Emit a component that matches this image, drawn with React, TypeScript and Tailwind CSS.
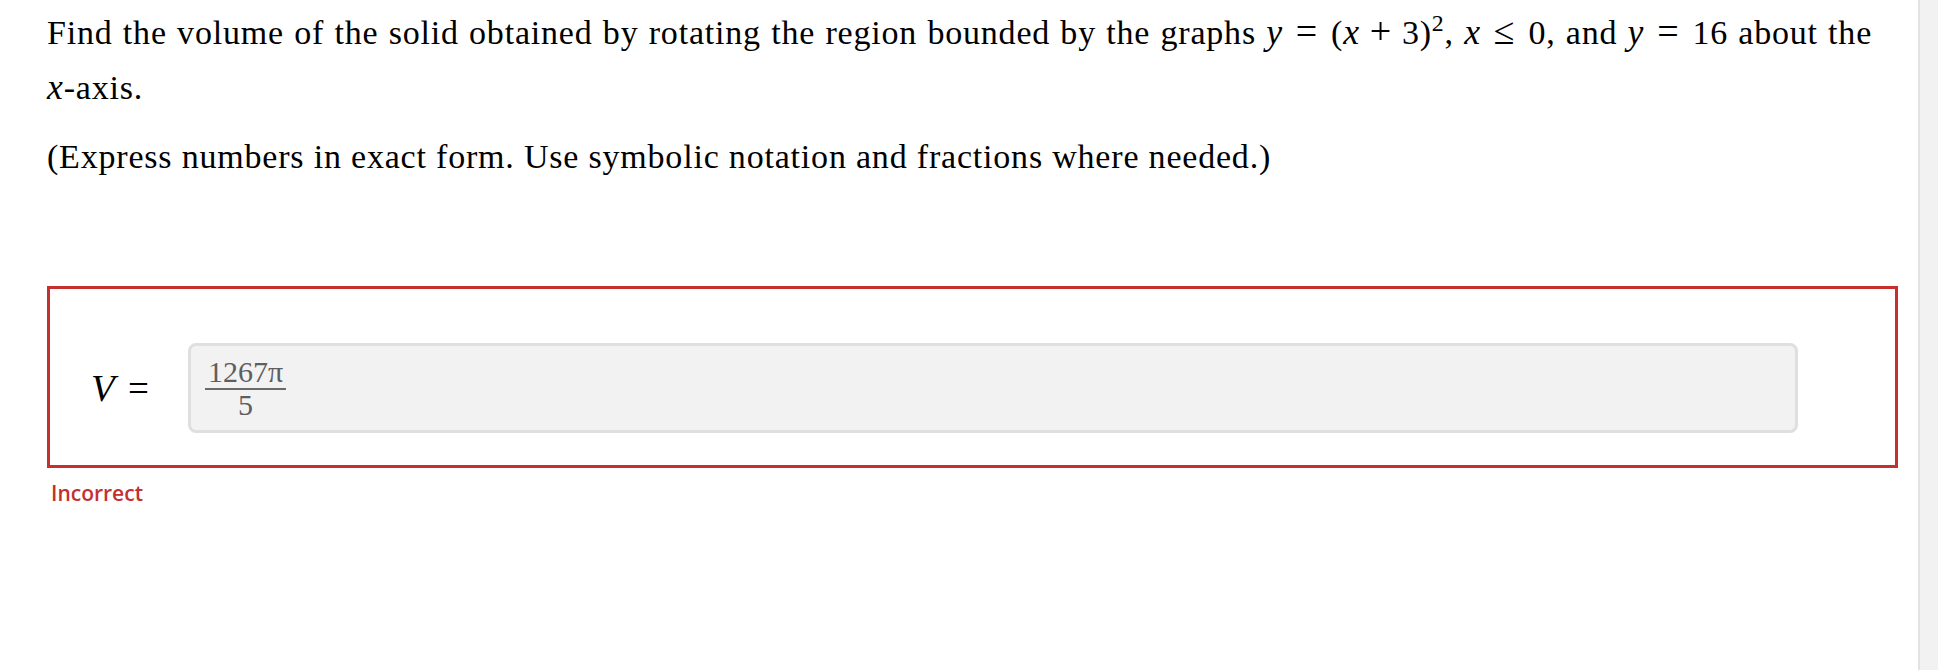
import React from 'react'

// ── Small math helpers ───────────────────────────────────────────

function Var({ children }: { children: React.ReactNode }) {
  return <span className="text-[1.05em] italic">{children}</span>
}

function Rel({ children }: { children: React.ReactNode }) {
  return <span className="mx-[0.34em] text-[1.12em]">{children}</span>
}

function Bin({ children }: { children: React.ReactNode }) {
  return <span className="mx-[0.26em] text-[1.12em]">{children}</span>
}

// ── Answer box ───────────────────────────────────────────────────

function AnswerField() {
  return (
    <div className="flex h-[90px] flex-1 items-center rounded-[8px] border-[3px] border-[#dfdfdf] bg-[#f2f2f2] pl-[14px]">
      <span className="inline-flex flex-col items-center font-['Liberation_Serif',serif] text-[30px] leading-[29px] text-[#5e5e5e]">
        <span className="px-[3px] pb-[2px]">1267π</span>
        <span className="h-[2px] w-full bg-[#6a6a6a]" />
        <span>5</span>
      </span>
    </div>
  )
}

// ── Page ─────────────────────────────────────────────────────────

export default function App() {
  return (
    <div className="flex h-[670px] w-full overflow-hidden bg-white">
      <main className="flex-1 pl-[47px] pt-[4px]">
        <div className="w-[1851px] font-['Liberation_Serif',serif] text-[34px] leading-[55px] tracking-[0.8px] text-black">
          <p className="[word-spacing:1px]">
            Find the volume of the solid obtained by rotating the region bounded by the graphs{' '}
            <Var>y</Var>
            <Rel>=</Rel>(<Var>x</Var>
            <Bin>+</Bin>3)
            <sup className="-top-[0.55em] text-[0.7em] leading-none">2</sup>, <Var>x</Var>
            <Rel>≤</Rel>0, and <Var>y</Var>
            <Rel>=</Rel>16 about the{' '}
            <span className="whitespace-nowrap">
              <Var>x</Var>-axis.
            </span>
          </p>
          <p className="mt-[14px]">
            (Express numbers in exact form. Use symbolic notation and fractions where needed.)
          </p>
        </div>

        {/* Answer block */}
        <div className="mt-[102px] flex w-[1851px] items-center border-[3px] border-[#c4302f] pb-[32px] pl-[41px] pr-[97px] pt-[54px]">
          <span className="w-[97px] shrink-0 font-['Liberation_Serif',serif] text-[37px] leading-none text-black">
            <Var>V</Var>
            <span className="ml-[0.36em]">=</span>
          </span>
          <AnswerField />
        </div>

        <p className="mt-[11px] pl-[4px] font-['Open_Sans',sans-serif] text-[21px] font-semibold leading-[28px] text-[#c4302f]">
          Incorrect
        </p>
      </main>

      {/* scrollbar track */}
      <div className="w-[20px] shrink-0 border-l-2 border-[#e2e2e2] bg-[#f2f2f2]" />
    </div>
  )
}
